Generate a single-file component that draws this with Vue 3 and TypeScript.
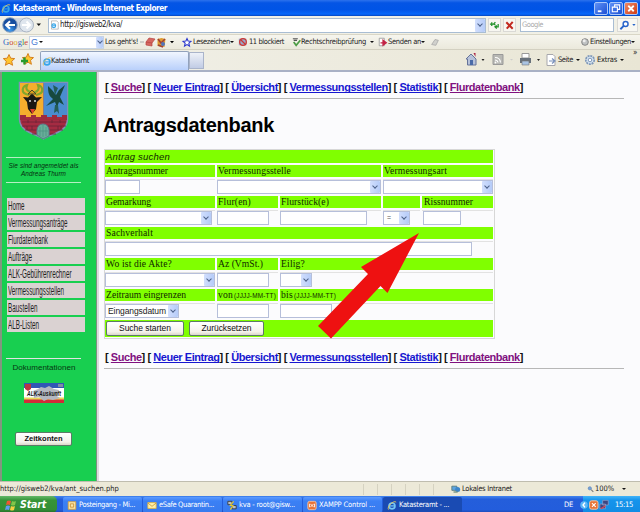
<script setup lang="ts">
import type { Directive } from 'vue'

type Measure = number | undefined

/* Spreads or tightens a label so that it takes a given width. */
const vFit: Directive<HTMLElement, Measure> = {
  mounted(el, binding) {
    if (!binding.value) return
    const natural = el.getBoundingClientRect().width
    if (binding.modifiers.scale) {
      el.style.transform = `scaleX(${binding.value / natural})`
    } else {
      const count = (el.textContent ?? '').length || 1
      el.style.letterSpacing = `${(binding.value - natural) / count}px`
    }
  },
}

const links = [
  { text: 'Suche', visited: true },
  { text: 'Neuer Eintrag', visited: false },
  { text: 'Übersicht', visited: false },
  { text: 'Vermessungsstellen', visited: false },
  { text: 'Statistik', visited: false },
  { text: 'Flurdatenbank', visited: true },
]

const menu = [
  { text: 'Home', width: 16.5 },
  { text: 'Vermessungsanträge', width: 59.5 },
  { text: 'Flurdatenbank', width: 40 },
  { text: 'Aufträge', width: 24 },
  { text: 'ALK-Gebührenrechner', width: 63.5 },
  { text: 'Vermessungsstellen', width: 56 },
  { text: 'Baustellen', width: 29.5 },
  { text: 'ALB-Listen', width: 31 },
]

const tasks = [
  { text: 'Posteingang - Mi...', icon: 'outlook', width: 56 },
  { text: 'eSafe Quarantin...', icon: 'mail', width: 55 },
  { text: 'kva - root@gisw...', icon: 'putty', width: 56 },
  { text: 'XAMPP Control ...', icon: 'xampp', width: 56 },
  { text: 'Katasteramt - ...', icon: 'ie', width: 50 },
]
</script>

<template>
  <div class="screen">
    <header class="titlebar">
      <svg class="ie" viewBox="0 0 12 12"><circle cx="6" cy="6.5" r="3.5" /><path class="bar" d="M3 6.5h6" /><path class="ring" d="M2 11C-1 8 8-1 11 2" /></svg>
      <b v-fit="154">Katasteramt - Windows Internet Explorer</b>
      <span class="win min"><svg viewBox="0 0 12 12"><path d="M2.5 9h4" /></svg></span>
      <span class="win"><svg viewBox="0 0 12 12"><path class="thin" d="M4.500 4V2h5.500v5H8M2 4.500h5.500v5H2z" /></svg></span>
      <span class="win close"><svg viewBox="0 0 12 12"><path d="M3 3l6 6M9 3L3 9" /></svg></span>
    </header>

    <div class="address">
      <svg class="arrows" viewBox="0 0 44 18">
        <defs>
          <radialGradient id="back" cx=".5" cy=".85"><stop offset="0" stop-color="#3f9cf0" /><stop offset="1" stop-color="#174e9f" /></radialGradient>
        </defs>
        <path d="M10 2h16v14H10z" fill="#cfd6df" />
        <circle cx="10" cy="9" r="7.3" fill="url(#back)" stroke="#8fa5bf" />
        <circle cx="26.5" cy="9" r="7" fill="#dfe6ee" stroke="#a9b4c2" />
        <path d="M15 9H6m4-3.7L6 9l4 3.7" fill="none" stroke="#fff" stroke-width="2" />
        <path d="M22 9h8m-3.5-3.5L30 9l-3.500 3.500" fill="none" stroke="#fff" stroke-width="2" />
        <path d="M36.500 7.500h4.500L38.800 10z" fill="#111" />
      </svg>
      <div class="url">
        <svg class="ie page" viewBox="0 0 12 12"><path class="sheet" d="M2 .5h7l2 2v9H2z" /><circle cx="5" cy="7" r="2.500" /><path class="bar" d="M3 7h4" /></svg>
        <span v-fit="62">http://gisweb2/kva/</span>
        <i class="drop"></i>
      </div>
      <span class="sq"><svg viewBox="0 0 12 12"><path d="M1 5h4M3 3v4M7 3l-2 2 2 1M10 5v3H7M8.500 6.500L6.500 8l2 2" fill="none" stroke="#24922c" stroke-width="1.400" /></svg></span>
      <span class="sq"><svg viewBox="0 0 12 12"><path d="M2.500 3l7 7M9.500 2.500L3 10" stroke="#c22a20" stroke-width="2.200" /></svg></span>
      <div class="search"><span v-fit="21">Google</span></div>
      <span class="sq go"><svg viewBox="0 0 20 12"><circle cx="8" cy="5" r="2.600" fill="#fff" stroke="#2864ca" stroke-width="1.500" /><path d="M6 7L2.500 10.500" stroke="#2864ca" stroke-width="2" /><path d="M15 5h3.500l-1.700 2z" fill="#2864ca" /></svg></span>
    </div>

    <div class="googlebar">
      <span class="logo" v-fit="24"><i class="b">G</i><i class="r">o</i><i class="y">o</i><i class="b">g</i><i class="g">l</i><i class="r">e</i></span>
      <div class="gbox"><em>G</em><s class="caret"></s><i class="drop"></i></div>
      <span class="los" v-fit="33">Los geht's!</span>
      <svg class="ticons" viewBox="0 0 36 14">
        <path d="M0 7h4" stroke="#aaa" /><path d="M6 7l3-4 6 1-3 4zM6 7v3l6 1V8" fill="#d56760" stroke="#b74440" stroke-width=".7" />
        <path d="M17.500 4l4-1 4 1-1 8-7-1z" fill="#df9c30" /><path d="M18 4l3 4 4-4M18 10l5 2" fill="none" stroke="#9f4035" stroke-width="1.500" /><circle cx="23" cy="9" r="2" fill="#5274ba" />
        <path d="M30 6h4l-2 2.300z" />
      </svg>
      <svg class="star" viewBox="0 0 12 12"><path d="M6 1.300l1.300 3 3.400.3-2.500 2.200.8 3.500L6 8.500l-3 1.800.8-3.500L1.300 4.600l3.400-.3z" fill="#fff" stroke="#2a36cc" stroke-width="1.300" /></svg>
      <span class="lese" v-fit="37">Lesezeichen</span><s class="caret"></s>
      <svg class="block" viewBox="0 0 12 12"><path d="M1 2h9v8H1z" fill="#9aa9cc" /><circle cx="6" cy="6" r="4" fill="none" stroke="#cc3734" stroke-width="1.500" /><path d="M3 3l6 6" stroke="#cc3734" stroke-width="1.500" /></svg>
      <span class="elf" v-fit="35">11 blockiert</span>
      <svg class="check" viewBox="0 0 12 12"><path d="M1 2h6M2 4h4" stroke="#555" stroke-width="1.300" /><path d="M2 6l3 4 5-6" fill="none" stroke="#4c9c45" stroke-width="2" /></svg>
      <span class="recht" v-fit="65">Rechtschreibprüfung</span><s class="caret wide"></s>
      <svg class="send" viewBox="0 0 12 12"><path d="M1.500 1.500h6v9h-6z" fill="#fff" stroke="#999" /><path d="M3 7h5M6 4l4 3-4 3z" fill="#c32445" stroke="#c32445" stroke-width="1.500" /></svg>
      <span class="sendan" v-fit="33">Senden an</span><s class="caret"></s>
      <svg class="pen" viewBox="0 0 12 12"><path d="M2 9l4-6 4 1-3 6z" fill="#d0d0cc" stroke="#aaa" /></svg>
      <svg class="gear" viewBox="0 0 12 12"><circle cx="6" cy="6" r="4" fill="#bfc2c3" stroke="#777" /><circle cx="5" cy="4.500" r="1.800" fill="#eee" /></svg>
      <span v-fit="41">Einstellungen</span><s class="caret"></s>
    </div>

    <div class="tabbar">
      <svg class="favs" viewBox="0 0 40 20">
        <path d="M9 4.500l1.700 3.700 4 .4-3 2.700.9 4-3.600-2.100-3.600 2.100.9-4-3-2.700 4-.4z" fill="#ffc52d" stroke="#d6811f" />
        <path d="M28 3.500l1.500 3.700 4 .4-3 2.700.9 4-3.400-2.100-3.600 2.100.9-4-3-2.700 4-.4z" fill="#ffc52d" stroke="#d6811f" />
        <path d="M21 11h7M24.500 7.500v7" stroke="#289b2b" stroke-width="2.400" />
      </svg>
      <div class="tab">
        <svg class="ie" viewBox="0 0 12 12"><circle cx="6" cy="6.500" r="3.500" /><path class="bar" d="M3 6.500h6" /><path class="ring" d="M2 11C-1 8 8-1 11 2" /></svg>
        <span v-fit="38">Katasteramt</span>
      </div>
      <div class="newtab"></div>
      <svg class="tools" viewBox="0 0 88 20">
        <path d="M2 9l5-5 5 5v6H3.500V9z" fill="#b6c1d9" stroke="#657399" /><path d="M6 10h3v5H6z" fill="#496aa8" /><path d="M9.500 3h2v4z" fill="#a24" />
        <path d="M17.500 9h3L19 11z" fill="#222" />
        <path d="M29 4.500h10v10H29z" fill="#b8b8b4" stroke="#999" /><path d="M31 7.500q5 0 5.500 5M31 10q2.500 0 3 2.500" fill="none" stroke="#fff" stroke-width="1.200" /><circle cx="31.500" cy="12.500" r=".9" fill="#fff" />
        <path d="M46 9h3l-1.500 1.500z" fill="#ccc" />
        <path d="M58 3.500h7V8h-7z" fill="#fff" stroke="#999" /><path d="M56 8h11v5H56z" fill="#68717b" /><path d="M58 11h7v4h-7z" fill="#a9c3e3" stroke="#777" stroke-width=".6" />
        <path d="M73 9h3l-1.500 2z" fill="#222" />
      </svg>
      <svg class="sheeticon" viewBox="0 0 12 14"><path d="M2 1.500h6l2 2v9H2z" fill="#fff" stroke="#a7a7ad" /><path d="M4 8h5M7 5.500L10 8l-3 2.500" fill="none" stroke="#7890bb" stroke-width="1.200" /></svg>
      <span class="seite" v-fit="15">Seite</span><s class="caret wide"></s>
      <svg class="cog" viewBox="0 0 12 12"><circle cx="6" cy="6" r="4.200" fill="#d7e5f3" stroke="#7f98b8" stroke-width="1.700" stroke-dasharray="2 .8" /><circle cx="6" cy="6" r="1.800" fill="#fff" stroke="#7f98b8" /></svg>
      <span class="extras" v-fit="20">Extras</span><s class="caret wide"></s>
      <span class="more">»</span>
    </div>

    <div class="body">
      <aside>
        <svg class="crest" viewBox="0 0 50 60">
          <path d="M.5 1.500h48V38c0 14-18 15-24 20C19 53 .5 52 .5 38z" fill="#a52b42" stroke="#7f90b6" stroke-width="1.500" />
          <path d="M1 2h23.500v34H1z" fill="#f5ae2d" /><path d="M24.500 2H48v34H24.500z" fill="#4a8dd0" />
          <path d="M10 14C0 12 4 5 8 4c-2 5 1 6 5 8M17 14c10-2 6-9 2-10 2 5-1 6-4 8" fill="none" stroke="#81a62c" stroke-width="2.200" />
          <path d="M4 16l5 .500 4-4 4 4 6-.5-5 5-1 7-4 5-4-5-1-7z" fill="#191713" />
          <path d="M9 13l4-4 4 4z" fill="#d79d1f" stroke="#4c482a" /><path d="M10 20h2m3 0h2" stroke="#ddd" stroke-width="1.500" /><path d="M11 28h5l-2.500 5z" fill="#e13e2d" />
          <path d="M29 5c0 7 1 10 5 13l-7 7 9-4 2 5 2-5 5 3-4-8 5-12-6 5-3 5-4-5z" fill="#17493f" />
          <path d="M34 4l5 3-3 7zM36 24l-1 8 3-2 2 3-1-9" fill="#245d57" />
          <path d="M1 34h6v4h5v-4h5v4h5v-4h6v4h5v-4h5v4h5v-4h5v5H1z" fill="#9d2a3e" />
          <path d="M3 41h44M3 45h44M6 49h38M13 53h24M9 39v3m8-3v3m16-3v3m8-3v3m-28 3v4m26-4v4M8 45v4m34-4v4" fill="none" stroke="#692439" stroke-width=".8" />
          <path d="M18 54V49q1-6 6-6t6 6v6l-6 3z" fill="#68ad99" stroke="#597c8b" /><path d="M21 46v9m3-11v12m3-10v9M19 50h10" stroke="#479282" stroke-width=".7" />
        </svg>
        <hr class="line a" />
        <p class="user"><span v-fit="70">Sie sind angemeldet als</span><br /><span v-fit="45">Andreas Thurm</span></p>
        <hr class="line b" />
        <nav class="menu">
          <a v-for="m in menu" :key="m.text"><span v-fit.scale="m.width">{{ m.text }}</span></a>
        </nav>
        <hr class="line c" />
        <div class="docs"><span v-fit="63">Dokumentationen</span></div>
        <svg class="banner" viewBox="0 0 40 20">
          <path d="M0 0h40v20H0z" fill="#fff" /><path d="M0 0h40v5H0z" fill="#3157b5" /><path d="M0 16h40v4H0z" fill="#d32b38" /><path d="M0 14.500h40v2H0z" fill="#e6d85a" />
          <path d="M9 8l5-2 3-2 4 1 4-2 5 3 5 1-2 6 3 2-7 2-5-1-4 2-5-4-5 1z" fill="#b4b8c1" />
          <path d="M1 1h6v5L4 8 1 6z" fill="#b93644" /><path d="M34 1h5v3h-5z" fill="#7f8fa2" />
          <text x="3" y="13" textLength="34" lengthAdjust="spacingAndGlyphs">ALK-Auskunft</text>
        </svg>
        <button class="xp zeit"><span v-fit="38">Zeitkonten</span></button>
      </aside>

      <main>
        <nav class="links"><span class="linkfit" v-fit="417.5"><template v-for="l in links" :key="l.text">[ <a :class="{ visited: l.visited }">{{ l.text }}</a>] </template></span></nav>
        <h1><span v-fit="171">Antragsdatenbank</span></h1>
        <form class="grid" @submit.prevent>
          <div class="h title all"><span v-fit="64">Antrag suchen</span></div>
          <div class="h"><span v-fit="62">Antragsnummer</span></div>
          <div class="h s2"><span v-fit="73">Vermessungsstelle</span></div>
          <div class="h s2"><span v-fit="63">Vermessungsart</span></div>
          <div class="c"><input class="w35" /></div>
          <div class="c s2"><div class="sel full"><i class="drop"></i></div></div>
          <div class="c s2"><div class="sel full"><i class="drop"></i></div></div>

          <div class="h"><span v-fit="45">Gemarkung</span></div>
          <div class="h"><span v-fit="33">Flur(en)</span></div>
          <div class="h"><span v-fit="48">Flurstück(e)</span></div>
          <div class="h"></div>
          <div class="h riss"><span v-fit="49">Rissnummer</span></div>
          <div class="c"><div class="sel w107"><i class="drop"></i></div></div>
          <div class="c"><input class="w52" /></div>
          <div class="c"><input class="w87" /></div>
          <div class="c"><div class="sel w27"><span class="eq">=</span><i class="drop"></i></div></div>
          <div class="c riss"><input class="w38" /></div>

          <div class="h all"><span v-fit="47">Sachverhalt</span></div>
          <div class="c all"><input class="w367" /></div>

          <div class="h"><span v-fit="66">Wo ist die Akte?</span></div>
          <div class="h"><span v-fit="45">Az (VmSt.)</span></div>
          <div class="h s3"><span v-fit="24">Eilig?</span></div>
          <div class="c"><div class="sel full"><i class="drop"></i></div></div>
          <div class="c"><input class="w52" /></div>
          <div class="c s3"><div class="sel w32"><i class="drop"></i></div></div>

          <div class="h"><span v-fit="80">Zeitraum eingrenzen</span></div>
          <div class="h"><span v-fit="15">von</span><small v-fit="42">(JJJJ-MM-TT)</small></div>
          <div class="h s3"><span v-fit="12">bis</span><small v-fit="42">(JJJJ-MM-TT)</small></div>
          <div class="c"><div class="sel w74"><span v-fit="58">Eingangsdatum</span><i class="drop"></i></div></div>
          <div class="c"><input class="w52" /></div>
          <div class="c s3"><input class="w52" /></div>

          <div class="h all actions">
            <button class="xp start"><span v-fit="52">Suche starten</span></button>
            <button class="xp reset"><span v-fit="50">Zurücksetzen</span></button>
          </div>
        </form>
        <nav class="links bottom"><span class="linkfit" v-fit="417.5"><template v-for="l in links" :key="l.text">[ <a :class="{ visited: l.visited }">{{ l.text }}</a>] </template></span></nav>
      </main>
      <svg class="pointer" viewBox="0 0 101 106"><path d="M101 0L43 34l7 7L0 93l13 12.500L62.500 53l7 7z" fill="#ee1111" /></svg>
    </div>

    <footer class="status">
      <span class="path" v-fit="112">http://gisweb2/kva/ant_suchen.php</span>
      <i v-for="n in 6" :key="n" class="sep"></i>
      <svg class="net" viewBox="0 0 12 12"><path d="M1 2h6v5H1z" fill="#5ca4df" stroke="#577" /><circle cx="8" cy="6" r="3" fill="#3c85ca" /><path d="M3 9h5" stroke="#687" stroke-width="1.500" /></svg>
      <span class="intra" v-fit="50">Lokales Intranet</span>
      <svg class="lens" viewBox="0 0 10 10"><circle cx="4" cy="4" r="2.300" fill="#72a2dc" stroke="#6386b7" /><path d="M6 6l3 3" stroke="#777" stroke-width="1.500" /></svg>
      <span v-fit="19">100%</span><s class="caret pct"></s>
    </footer>

    <footer class="taskbar">
      <div class="startbtn">
        <svg viewBox="0 0 12 12"><path d="M2 2q2-1 4 0L5 6Q3 5 1 6z" fill="#ee5633" /><path d="M7 2q2 1 4 0l-1 4Q8 7 6 6z" fill="#83c64a" /><path d="M1 7q2-1 4 0l-1 4Q2 10 0 11z" fill="#5f9cf2" /><path d="M6 7q2 1 4 0l-1 4q-2 1-4 0z" fill="#f6cf40" /></svg>
        <b v-fit="26">Start</b>
      </div>
      <div v-for="t in tasks" :key="t.text" class="task" :class="{ active: t.icon === 'ie' }">
        <svg viewBox="0 0 12 12">
          <template v-if="t.icon === 'outlook'"><path d="M1.500 1.500h9v9h-9z" fill="#f8e6ab" stroke="#e3a52f" /><path d="M4 4h4v4H4z" fill="none" stroke="#c98b2d" /></template>
          <template v-else-if="t.icon === 'mail'"><path d="M1 2.500h10v7H1z" fill="#fff0a8" stroke="#dfb343" /><path d="M1 3l5 4 5-4" fill="none" stroke="#c79637" /></template>
          <template v-else-if="t.icon === 'putty'"><path d="M1 1h5v4H1zM6 6h5v4H6z" fill="#b9c0c7" stroke="#333" /><path d="M8 1L4 6h3l-3 5" fill="none" stroke="#e2c935" stroke-width="1.400" /></template>
          <template v-else-if="t.icon === 'xampp'"><rect x="1" y="1" width="10" height="10" rx="2" fill="#e77336" stroke="#f7c9a8" /><path d="M4 4l4 4M8 4L4 8M3 4v4m6-4v4" stroke="#fff" /></template>
          <template v-else><circle cx="6" cy="6.500" r="3.500" fill="none" stroke="#75c6f5" stroke-width="2" /><path d="M3 6.500h6" stroke="#75c6f5" stroke-width="1.500" /><path d="M2 11C-1 8 8-1 11 2" fill="none" stroke="#f5ce51" /></template>
        </svg>
        <span v-fit="t.width">{{ t.text }}</span>
      </div>
      <span class="de" v-fit="9">DE</span>
      <div class="tray">
        <svg viewBox="0 0 30 16"><circle cx="0" cy="8" r="4" fill="#5cb8f8" /><path d="M1 5.500L-1 8l2 2.500" fill="none" stroke="#fff" stroke-width="1.500" /><rect x="6" y="3.500" width="9" height="9" rx="2" fill="#e77336" stroke="#f7c9a8" /><path d="M8.500 6l4 4m0-4l-4 4" stroke="#fff" stroke-width="1.200" /><path d="M20 3h6v5h-6zM17 7h6v5h-6z" fill="#3c4680" stroke="#9ba8cf" stroke-width=".7" /><path d="M18 12l5-3" stroke="#d04857" stroke-width="1.500" /></svg>
        <span v-fit="18">15:15</span>
      </div>
    </footer>
  </div>
</template>

<style>
body { margin: 0; overflow: hidden; }
</style>

<style scoped>
.screen { width: 640px; height: 512px; display: flex; flex-direction: column; overflow: hidden; background: #fbfbfd; font: 7.5px/12px "DejaVu Sans Condensed", "DejaVu Sans", sans-serif; color: #222; }
.screen * { box-sizing: border-box; flex-shrink: 0; }
span, b { display: inline-block; white-space: nowrap; }
svg { display: block; overflow: visible; }
i, em { font-style: normal; }
s { text-decoration: none; }

.ie { width: 10px; height: 11px; fill: none; stroke: #37a5e9; stroke-width: 2; }
.ie .bar { stroke-width: 1.3; }
.ie .ring { stroke: #eac55b; stroke-width: 1; }
.ie .sheet { fill: #fff; stroke: #999; stroke-width: .8; }
.ie.page { width: 9px; height: 10px; stroke-width: 1.5; }

.titlebar { height: 16px; display: flex; align-items: center; padding: 0 2px 0 1px; gap: 1px; background: linear-gradient(#2c72ed, #0455e5 18%, #0054e6 60%, #0667fb 88%, #0445bd); color: #fff; }
.titlebar b { font: bold 8.2px/14px "DejaVu Sans Condensed", sans-serif; margin-left: 1px; }
.win { width: 14px; height: 13px; border: 1px solid #a8c6fa; border-radius: 2px; background: linear-gradient(135deg, #5f91f6, #1c50d4); }
.win svg { width: 12px; height: 11px; fill: none; stroke: #fff; stroke-width: 2; }
.win .thin { stroke-width: 1.2; }
.min { margin-left: auto; }
.close { background: linear-gradient(135deg, #ef8a67, #cf3b14); }

.address { height: 18px; display: flex; align-items: center; background: #f1f0e6; padding-right: 2px; }
.arrows { width: 44px; height: 18px; }
.url { margin-left: 4px; width: 438px; height: 15px; background: #fff; border: 1px solid #a9bdd3; display: flex; align-items: center; padding-left: 1px; gap: 1px; font-size: 8px; }
.drop { margin-left: auto; width: 10px; height: 100%; background: linear-gradient(90deg, #d2dffd, #b5cbf8); display: grid; place-items: center; border-radius: 1px; }
.drop::before { content: ""; width: 3px; height: 3px; margin-top: -2px; border: solid #4b6088; border-width: 0 1.3px 1.3px 0; transform: rotate(45deg); }
.sq { width: 13px; height: 14px; margin-left: 2px; border: 1px solid #dad9d5; background: #f8f7f2; }
.sq svg { width: 11px; height: 12px; }
.search { margin-left: 4px; width: 94px; height: 14px; background: #fff; border: 1px solid #a9bdd3; color: #aaa; padding-left: 1px; }
.go { width: 21px; margin-left: 3px; }
.go svg { width: 19px; }

.googlebar { height: 16px; display: flex; align-items: center; background: linear-gradient(#f6f5ee, #ebe9dc); border-top: 1px solid #d9d6c6; border-bottom: 1px solid #d3d0c1; padding-left: 3px; }
.logo { font: 8.5px/13px "Liberation Serif", serif; width: 24px; }
.b { color: #3263c3; } .r { color: #cc3d35; } .y { color: #dda927; } .g { color: #43994b; }
.gbox { margin-left: 2px; width: 75px; height: 13px; background: #fff; border: 1px solid #c6d3e4; display: flex; align-items: center; padding-left: 1px; }
.gbox em { color: #4679d3; font: 9px/10px "Liberation Sans", sans-serif; margin-right: 1px; }
.gbox .drop { width: 7px; }
.caret { width: 0; height: 0; margin-left: 0; border: 2px solid transparent; border-top: 2.5px solid #111; border-bottom: 0; }
.los { margin-left: 1px; }
.ticons { width: 36px; height: 14px; margin: 0 0 0 2px; }
.star { width: 10px; height: 11px; margin: 0 1px 0 6px; }
.block, .check, .send, .pen, .gear { width: 10px; height: 10px; }
.block { margin: 0 0 0 4px; }
.elf { margin-left: 1px; }
.check { margin-left: 8px; }
.recht { margin-left: -1px; }
.wide { margin-left: 4px; border-width: 2.500px 2px 0; }
.send { margin-left: 4px; }
.pen { margin-left: 5px; }
.gear { margin: 0 0 0 auto; }
.googlebar .gear ~ .caret { margin-right: 5px; }

.tabbar { height: 22px; display: flex; align-items: flex-start; background: linear-gradient(90deg, #f2f1ea, #e9e6d5); border-bottom: 2px solid #a9b1c5; position: relative; }
.favs { width: 40px; height: 20px; }
.tab { height: 19px; width: 149px; margin-top: 1px; border: 1px solid #92a2bc; border-bottom: 0; border-radius: 2px 2px 0 0; background: linear-gradient(#f1f6ff, #b9d0fb); display: flex; align-items: center; padding-left: 1px; }
.tab span { margin-left: -1px; }
.newtab { width: 15px; height: 17px; margin-top: 2px; border: 1px solid #aab4ca; background: linear-gradient(#eef1f8, #c1cce5); }
.tools { width: 88px; height: 20px; margin-left: 260px; }
.sheeticon { width: 12px; height: 14px; margin: 3px 0 0 -7px; }
.seite { margin: 4px 0 0 1px; }
.tabbar .caret { margin-top: 9px; margin-left: 3px; }
.cog { width: 12px; height: 12px; margin: 4px 0 0 4px; }
.extras { margin: 4px 0 0 1px; }
.more { margin: -3px 0 0 9px; font-size: 8px; }

.body { height: 409px; display: flex; position: relative; background: #fbfbfd; }
aside { width: 97px; height: 409px; background: #18cf50; border-left: 2px solid #829680; border-right: 1px solid #7c927e; display: flex; flex-direction: column; align-items: flex-start; }
.crest { width: 50px; height: 60px; margin: 9px 0 0 17px; }
.line { width: 75px; height: 1px; margin: 0 0 0 4px; border: 0; background: #b6efc4; }
.a { margin-top: 16px; }
.user { margin: 4px 0 0 4px; width: 75px; text-align: center; font: italic 6.4px/8px "Liberation Sans", sans-serif; height: 20px; color: #062c0f; }
.b.line { margin-top: 0; }
.menu { margin: 15px 0 0 5px; display: grid; grid-auto-rows: 14.7px; gap: 2.3px; width: 78px; }
.menu a { background: #dad2d2; font: 12px/16px "Liberation Sans", sans-serif; padding-left: 1px; display: block; overflow: hidden; }
.menu span { transform-origin: 0 0; }
.c.line { margin-top: 26px; }
.docs { width: 84px; text-align: center; margin-top: 3px; font: 8px/12px "Liberation Sans", sans-serif; color: #053811; }
.banner { width: 40px; height: 20px; margin: 9px 0 0 22px; }
.banner text { font: italic bold 7px "Liberation Sans", sans-serif; fill: #171717; }
.xp { padding: 0; border: 1px solid #5c7a68; border-radius: 2px; background: linear-gradient(#fff, #f4f2eb 75%, #dbd6c9); color: #111; font: 8.500px/11px "Liberation Sans", sans-serif; display: flex; align-items: center; justify-content: center; }
.zeit { width: 57px; height: 14px; margin: 29px 0 0 13px; font-weight: bold; font-size: 7.5px; }

main { width: 543px; border-left: 2px solid #dddde0; padding: 8px 17px 0 5px; }
.links { height: 19px; border-bottom: 1px solid #b7b7b7; padding: 0 0 0 1px; font: bold 11px/15px "Liberation Sans", sans-serif; width: 520px; color: #111; }
.links a { color: #1616d0; text-decoration: underline; text-decoration-skip-ink: none; text-decoration-thickness: 1px; }
.links a.visited { color: #80107f; }
h1 { margin: 14px 0 0 -1px; height: 25px; font: bold 20px/25px "Liberation Sans", sans-serif; color: #000; }
.grid { margin: 11px 0 0; width: 391px; height: 190px; border: 1px solid #d7d7d7; display: grid; grid-template-columns: 110px 61px 101px 37px 71px; grid-template-rows: 13px 12px 15px 12px 15px 12px 15px 12px 15px 12px 15px 17px; column-gap: 2px; row-gap: 2px; padding: 0; }
.grid > div { min-width: 0; display: flex; align-items: center; }
.h { background: #80ff00; padding-left: 1px; font: 9.6px/12px "Liberation Serif", serif; color: #102800; }
.title { font: italic 9.5px/13px "Liberation Sans", sans-serif; }
.h small { font: 6.4px/11px "Liberation Sans", sans-serif; white-space: nowrap; margin-left: 1px; }
.c { background: #fbfbfd; border-top: 1px solid #e2e2e2; }
.h.riss { padding-left: 2px; }
.c.riss { padding-left: 1px; }
.all { grid-column: span 5; }
.s2 { grid-column: span 2; }
.s3 { grid-column: span 3; }
input, .sel { height: 14px; border: 1px solid #b6bfda; background: #fff; padding: 0; margin: 0; border-radius: 0; display: flex; align-items: center; font: 8.500px/10px "Liberation Sans", sans-serif; }
.sel span { margin-left: 2px; }
.sel .eq { color: #555; font-size: 7px; margin-left: 3px; }
.full { width: 100%; }
.w27 { width: 27px; } .w32 { width: 32px; } .w35 { width: 35px; } .w38 { width: 38px; } .w52 { width: 52px; } .w74 { width: 74px; } .w87 { width: 87px; } .w107 { width: 107px; } .w367 { width: 367px; }
.start { width: 78px; height: 15px; }
.reset { width: 75px; height: 15px; margin-left: 5px; }
.bottom { margin-top: 11px; }
.pointer { position: absolute; left: 318px; top: 161px; width: 101px; height: 106px; }

.status { height: 15px; display: flex; align-items: center; background: #ece9d8; border-top: 1px solid #bfbdaf; }
.path { width: 112px; margin-right: 251px; }
.sep { width: 14px; height: 11px; border-left: 1px solid #d5d2c1; }
.net { width: 10px; height: 11px; margin-left: 4px; }
.intra { margin: 0 75px 0 1px; }
.lens { width: 7px; height: 8px; margin-right: 1px; }
.pct { margin-left: 8px; }

.taskbar { height: 17px; display: flex; align-items: stretch; background: linear-gradient(#4285ef, #245edb 20%, #235ddc 80%, #1b48af); color: #fff; }
.startbtn { width: 57px; height: 17px; border-radius: 0 5px 5px 0; background: linear-gradient(#65b968, #369438 25%, #338e35 80%, #25682a); display: flex; align-items: center; padding-left: 5px; gap: 3px; margin-right: 6px; }
.startbtn svg { width: 12px; height: 12px; }
.startbtn b { font: italic bold 10.5px/15px "DejaVu Sans Condensed", sans-serif; }
.task { width: 79px; height: 16px; margin: 1px 1px 0 0; border-radius: 2px; background: linear-gradient(#5b9bff, #3b80f5 25%, #387bee); display: flex; align-items: center; padding-left: 4px; gap: 2px; }
.task svg { width: 10px; height: 11px; }
.active { background: #1a4bb3; }
.de { margin: 3px 10px 0 auto; }
.tray { width: 57px; background: linear-gradient(#42b4f8, #1594ec 25%, #128ce4); display: flex; align-items: center; padding-left: 1px; }
.tray svg { width: 28px; height: 16px; margin-right: 3px; }
</style>
